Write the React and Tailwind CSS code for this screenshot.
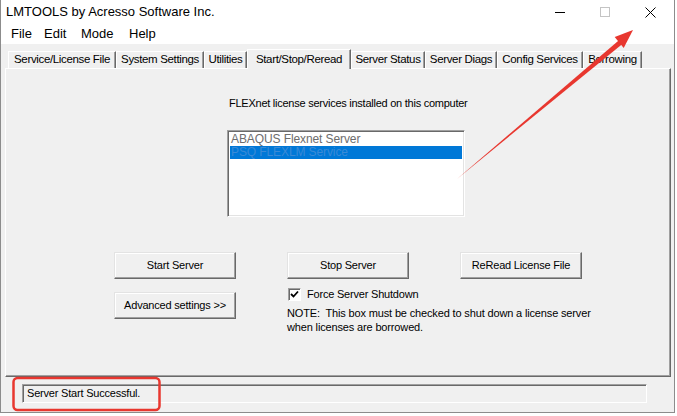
import React from 'react';

const tabs = [
  { label: 'Service/License File', w: 'w-[108px]' },
  { label: 'System Settings', w: 'w-[88px]' },
  { label: 'Utilities', w: 'w-[43px]' },
  { label: 'Start/Stop/Reread', w: 'w-[104px]', active: true },
  { label: 'Server Status', w: 'w-[74px]' },
  { label: 'Server Diags', w: 'w-[72px]' },
  { label: 'Config Services', w: 'w-[86px]' },
  { label: 'Borrowing', w: 'w-[59px]' },
];

const menus = [
  { label: 'File', w: 'w-[33px]' },
  { label: 'Edit', w: 'w-[37px]' },
  { label: 'Mode', w: 'w-[48px]' },
  { label: 'Help', w: 'w-[40px]' },
];

// classic raised push button
const Btn = ({ children }) => (
  <div className="w-[122px] h-[27px] flex items-center justify-center bg-[#f0f0f0] border border-t-[#e3e3e3] border-l-[#e3e3e3] border-r-[#696969] border-b-[#696969] shadow-[inset_-1px_-1px_#a0a0a0,inset_1px_1px_#ffffff] text-[11px] tracking-[-0.2px] text-black whitespace-nowrap">
    {children}
  </div>
);

const Tab = ({ label, w, active }) =>
  active ? (
    <div className={`${w} h-[20px] -mb-px relative z-10 flex items-center justify-center bg-[#f0f0f0] border-t border-l border-t-white border-l-white border-r border-r-[#696969] shadow-[inset_-1px_0_#a0a0a0] text-[11.5px] tracking-[-0.35px] text-black whitespace-nowrap`}>
      {label}
    </div>
  ) : (
    <div className={`${w} h-[17px] flex items-center justify-center bg-[#f0f0f0] border-t border-l border-t-white border-l-white border-r border-r-[#696969] shadow-[inset_-1px_0_#a0a0a0] text-[11.5px] tracking-[-0.35px] text-black whitespace-nowrap`}>
      {label}
    </div>
  );

export default function App() {
  return (
    <div className="relative w-[677px] h-[416px] overflow-hidden bg-white font-['Liberation_Sans',Arial,sans-serif]">
      <div className="w-[675px] h-[413px] flex flex-col border-l border-r border-b border-[#8c8c8c]">
        {/* title bar */}
        <div className="h-[24px] flex items-center bg-white">
          <span className="pl-[5px] text-[13px] text-black">LMTOOLS by Acresso Software Inc.</span>
          <div className="ml-auto flex items-center h-full">
            <div className="w-[45px] h-full flex items-center justify-center">
              <div className="w-[10px] h-px bg-black" />
            </div>
            <div className="w-[45px] h-full flex items-center justify-center">
              <div className="w-[10px] h-[10px] border border-[#c4c4c4]" />
            </div>
            <div className="w-[47px] h-full flex items-center justify-center">
              <svg width="11" height="11" viewBox="0 0 11 11">
                <path d="M0.5 0.5 L10.5 10.5 M10.5 0.5 L0.5 10.5" stroke="#000" strokeWidth="1" />
              </svg>
            </div>
          </div>
        </div>

        {/* menu bar */}
        <div className="h-[20px] flex items-center bg-white pl-[10px]">
          {menus.map((m) => (
            <span key={m.label} className={`${m.w} text-[13px] text-black`}>{m.label}</span>
          ))}
        </div>

        {/* client area */}
        <div className="flex-1 flex flex-col bg-[#f0f0f0] pl-[4px]">
          <div className="flex items-end h-[24px] pt-[5px] pl-[3px]">
            {tabs.map((t) => (
              <Tab key={t.label} {...t} />
            ))}
          </div>

          <div className="w-[666px] h-[309px] flex flex-col border border-t-white border-l-white border-r-[#696969] border-b-[#696969] shadow-[inset_-1px_-1px_#a0a0a0]">
            <div className="mt-[27px] ml-[223px] text-[11px] tracking-[-0.25px] leading-[14px] text-black">
              FLEXnet license services installed on this computer
            </div>

            {/* services list */}
            <div className="mt-[20px] ml-[221px] w-[238px] h-[87px] bg-white border border-t-[#a0a0a0] border-l-[#a0a0a0] border-r-white border-b-white shadow-[inset_1px_1px_#696969,inset_-1px_-1px_#e3e3e3] p-[2px]">
              <div className="h-[13px] leading-[13px] px-[1px] text-[12px] tracking-[-0.1px] text-[#6d6d6d]">ABAQUS Flexnet Server</div>
              <div className="h-[13px] leading-[13px] px-[1px] text-[12px] tracking-[-0.1px] bg-[#0078d7] text-[#3a8ad6]">PSQ FLEXLM Service</div>
            </div>

            <div className="mt-[35px] ml-[108px] flex gap-[51px]">
              <Btn>Start Server</Btn>
              <Btn>Stop Server</Btn>
              <Btn>ReRead License File</Btn>
            </div>

            <div className="mt-[9px] ml-[108px] flex gap-[51px]">
              <div className="pt-[4px]">
                <Btn>Advanced settings &gt;&gt;</Btn>
              </div>
              <div className="flex flex-col">
                <div className="flex items-center h-[13px] pl-px">
                  <div className="w-[13px] h-[13px] bg-white border border-t-[#a0a0a0] border-l-[#a0a0a0] border-r-white border-b-white shadow-[inset_1px_1px_#696969] flex items-center justify-center">
                    <svg width="9" height="9" viewBox="0 0 9 9">
                      <path d="M1 4 L3.5 6.5 L8 1.5" stroke="#000" strokeWidth="1.8" fill="none" />
                    </svg>
                  </div>
                  <span className="ml-[6px] text-[11px] tracking-[-0.2px] text-black">Force Server Shutdown</span>
                </div>
                <div className="mt-[5px] text-[11px] tracking-[-0.15px] leading-[14px] text-black whitespace-nowrap">
                  NOTE:&nbsp; This box must be checked to shut down a license server
                  <br />
                  when licenses are borrowed.
                </div>
              </div>
            </div>
          </div>

          {/* status line */}
          <div className="mt-[7px] ml-[17px] w-[625px] h-[19px] flex items-center border border-t-[#a0a0a0] border-l-[#a0a0a0] border-r-white border-b-white shadow-[inset_1px_1px_#696969] pl-[4px] text-[11px] tracking-[-0.2px] text-black">
            Server Start Successful.
          </div>
        </div>
      </div>

      {/* red annotations */}
      <svg className="absolute inset-0 pointer-events-none" width="677" height="416" viewBox="0 0 677 416">
        <polygon points="457,179 623.6,42.9 620.4,39.1" fill="#e8372f" />
        <polygon points="633,30 623.7,48 614.7,37" fill="#e8372f" />
        <rect x="13.5" y="378" width="146" height="32" rx="4" fill="none" stroke="#e8372f" strokeWidth="2.5" />
      </svg>
    </div>
  );
}
